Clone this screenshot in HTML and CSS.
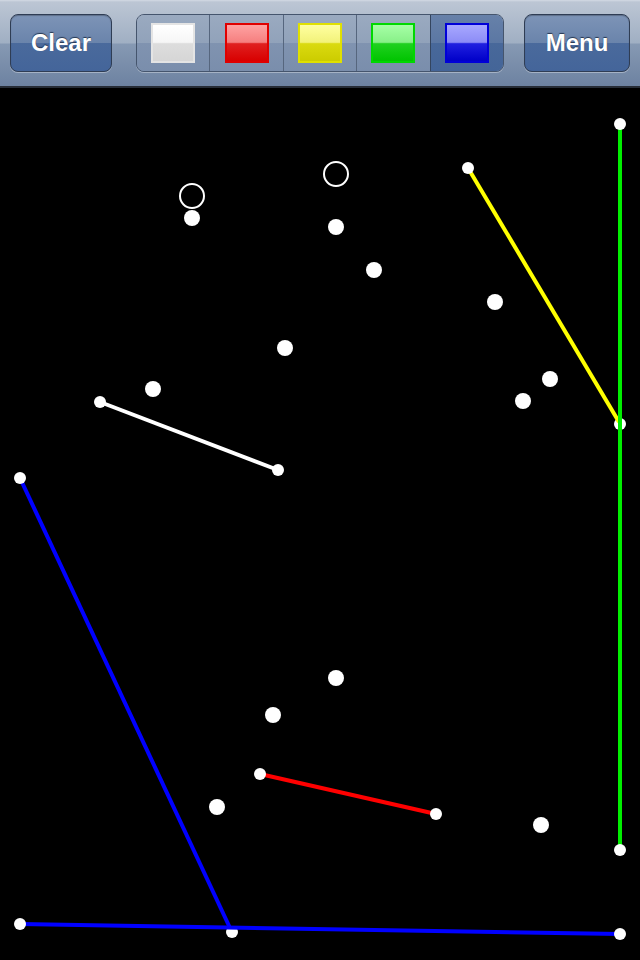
FILE: index.html
```html
<!DOCTYPE html>
<html>
<head>
<meta charset="utf-8">
<link rel="stylesheet" href="styles.css">
</head>
<body>
<div class="app">
  <div class="toolbar">
    <button class="btn">Clear</button>
    <div class="segmented">
      <div class="seg"><span class="swatch sw-white"></span></div>
      <div class="seg"><span class="swatch sw-red"></span></div>
      <div class="seg"><span class="swatch sw-yellow"></span></div>
      <div class="seg"><span class="swatch sw-green"></span></div>
      <div class="seg selected"><span class="swatch sw-blue"></span></div>
    </div>
    <button class="btn">Menu</button>
  </div>
  <svg class="canvas" width="640" height="872" viewBox="0 88 640 872">
    <rect x="0" y="88" width="640" height="872" fill="#000"/>
    <g fill="#fff">
      <circle cx="620" cy="424" r="6"/>
      <circle cx="232" cy="932" r="6"/>
    </g>
    <g stroke-width="4" stroke-linecap="butt">
      <line x1="468" y1="168" x2="619" y2="422" stroke="#ffff00"/>
      <line x1="620" y1="124" x2="620" y2="850" stroke="#00ee00"/>
      <line x1="100" y1="402" x2="278" y2="470" stroke="#ffffff"/>
      <line x1="20" y1="478" x2="230" y2="928" stroke="#0000ff"/>
      <line x1="20" y1="924" x2="620" y2="934" stroke="#0000ff"/>
      <line x1="260" y1="774" x2="436" y2="814" stroke="#ff0000"/>
    </g>
    <g fill="#fff">
      <circle cx="620" cy="124" r="6"/>
      <circle cx="468" cy="168" r="6"/>
      <circle cx="620" cy="850" r="6"/>
      <circle cx="100" cy="402" r="6"/>
      <circle cx="278" cy="470" r="6"/>
      <circle cx="20" cy="478" r="6"/>
      <circle cx="20" cy="924" r="6"/>
      <circle cx="620" cy="934" r="6"/>
      <circle cx="260" cy="774" r="6"/>
      <circle cx="436" cy="814" r="6"/>

      <circle cx="192" cy="218" r="8"/>
      <circle cx="336" cy="227" r="8"/>
      <circle cx="374" cy="270" r="8"/>
      <circle cx="495" cy="302" r="8"/>
      <circle cx="285" cy="348" r="8"/>
      <circle cx="153" cy="389" r="8"/>
      <circle cx="550" cy="379" r="8"/>
      <circle cx="523" cy="401" r="8"/>
      <circle cx="336" cy="678" r="8"/>
      <circle cx="273" cy="715" r="8"/>
      <circle cx="217" cy="807" r="8"/>
      <circle cx="541" cy="825" r="8"/>
    </g>
    <g fill="none" stroke="#fff" stroke-width="2">
      <circle cx="192" cy="196" r="12"/>
      <circle cx="336" cy="174" r="12"/>
    </g>
  </svg>
</div>
</body>
</html>
```
FILE: styles.css
```css
html, body {
  margin: 0;
  padding: 0;
  background: #000;
}
.app {
  width: 640px;
  height: 960px;
  display: flex;
  flex-direction: column;
  overflow: hidden;
}
.toolbar {
  height: 86px;
  flex: none;
  display: flex;
  align-items: center;
  padding: 0 10px;
  justify-content: space-between;
  background: linear-gradient(to bottom, #d3dae4 0px, #bcc6d4 2px, #a0afc3 43px, #8699b3 44px, #6d82a1 86px);
  border-bottom: 2px solid #262c36;
  box-sizing: content-box;
}
.btn {
  font-family: "Liberation Sans", Arial, sans-serif;
  font-weight: bold;
  font-size: 24px;
  color: #fff;
  text-shadow: 0 -1px 1px rgba(25, 40, 65, 0.85);
  height: 58px;
  box-sizing: border-box;
  border: 1.5px solid #2f3d54;
  border-radius: 8px;
  background: linear-gradient(to bottom, #7d94b7 0%, #6a84ab 50%, #4a6a9c 50%, #44659a 100%);
  box-shadow: 0 1px 0 rgba(255,255,255,0.35), inset 0 1px 1px rgba(0,0,0,0.25);
  padding: 0 0 1px 0;
}
.btn:first-child {
  width: 102px;
}
.btn:last-child {
  width: 106px;
}
.segmented {
  display: flex;
  width: 368px;
  height: 58px;
  box-sizing: border-box;
  border: 1.5px solid #45556d;
  border-radius: 8px;
  overflow: hidden;
  box-shadow: 0 1px 0 rgba(255,255,255,0.35), inset 0 1px 1px rgba(0,0,0,0.2);
  margin-left: 15px;
  margin-right: 11px;
}
.seg {
  flex: 1;
  display: flex;
  align-items: center;
  justify-content: center;
  background: linear-gradient(to bottom, #9aaac0 0%, #91a2ba 50%, #8093b0 50%, #7a8eac 100%);
  border-left: 1.5px solid #56667e;
}
.seg:first-child {
  border-left: none;
}
.seg.selected {
  background: linear-gradient(to bottom, #6781a9 0%, #5b77a3 50%, #48689a 50%, #446598 100%);
  border-left: 1.5px solid #34455f;
}
.swatch {
  width: 44px;
  height: 40px;
  box-sizing: border-box;
  border: 2px solid;
  display: block;
}
.sw-white {
  border-color: #e4e4e4;
  background: linear-gradient(to bottom, #ffffff 0%, #f6f6f6 48%, #dddddd 52%, #d6d6d6 100%);
}
.sw-red {
  border-color: #e00000;
  background: linear-gradient(to bottom, #ffa2a2 0%, #f57f7f 48%, #e02020 52%, #d80000 100%);
}
.sw-yellow {
  border-color: #e0e000;
  background: linear-gradient(to bottom, #ffffa0 0%, #f2f27a 48%, #dada10 52%, #cccc00 100%);
}
.sw-green {
  border-color: #00d800;
  background: linear-gradient(to bottom, #a6ffa6 0%, #88f088 48%, #20d020 52%, #00c400 100%);
}
.sw-blue {
  border-color: #0000d8;
  background: linear-gradient(to bottom, #a8a8ff 0%, #8c8cf6 48%, #2020e0 52%, #0000c8 100%);
}
.canvas {
  display: block;
  flex: none;
}
```
